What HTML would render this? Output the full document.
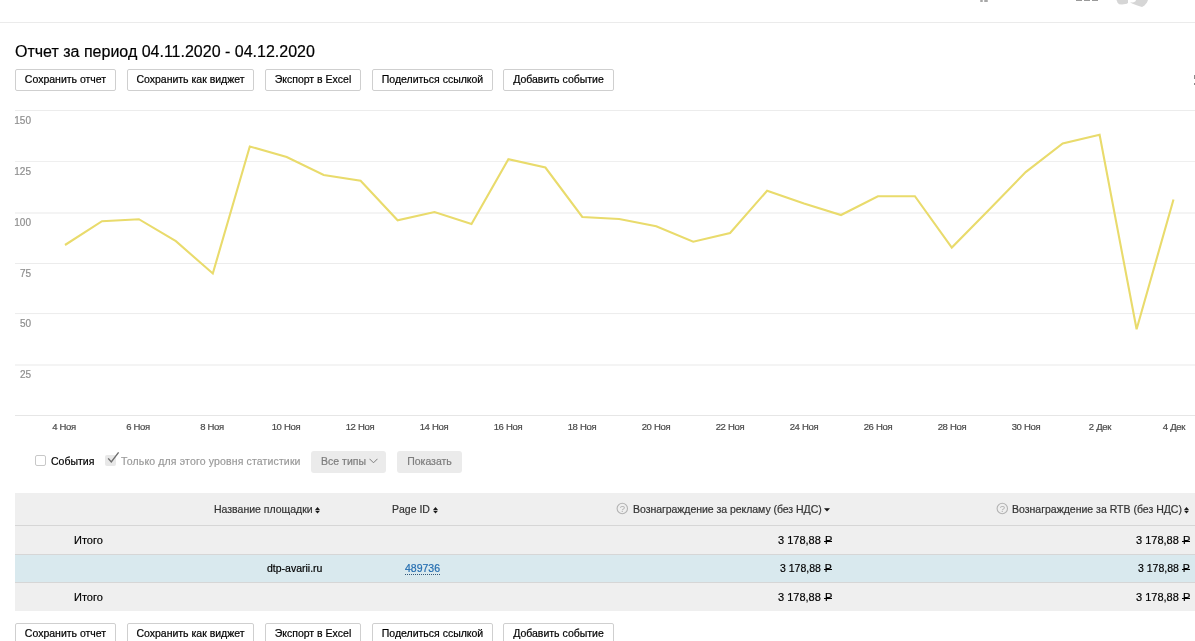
<!DOCTYPE html>
<html><head><meta charset="utf-8">
<style>
*{margin:0;padding:0;box-sizing:border-box}
html,body{width:1195px;height:641px;overflow:hidden;background:#fff}
body{position:relative;-webkit-text-stroke:0.2px currentColor;font-family:"Liberation Sans",sans-serif;color:#000}
.a{position:absolute;white-space:nowrap;will-change:transform}
.topline{position:absolute;left:0;top:22px;width:1195px;height:1px;background:#ebebeb}
.title{left:15px;top:43px;font-size:16px;line-height:18px;color:#000}
.btn{position:absolute;will-change:transform;height:22px;border:1px solid #cfcfcf;border-radius:2px;background:#fff;font-size:10.5px;line-height:19px;text-align:center;color:#000}
.yl{position:absolute;will-change:transform;font-size:10px;line-height:12px;color:#8e8e8e;width:17px;text-align:right;left:14px}
.xl{position:absolute;will-change:transform;font-size:9.5px;line-height:10px;letter-spacing:-.3px;color:#4a4a4a;width:60px;text-align:center;top:422px}
.gbtn{position:absolute;will-change:transform;height:22px;top:451px;background:#ebebeb;border-radius:3px;font-size:10.5px;line-height:21px;color:#7d7d7d;text-align:center}
.tbl{position:absolute;left:15px;width:1180px;background:#efefef}
.t{position:absolute;will-change:transform;font-size:10.5px;line-height:12px;white-space:nowrap}
.v{word-spacing:0}
.rub{display:inline-block;position:relative;margin-left:1px}
.rub::after{content:"";position:absolute;left:-.5px;right:.3px;top:7.2px;height:1.1px;background:currentColor}
</style></head><body>

<!-- top header remnants -->
<div class="topline"></div>
<div class="a" style="left:980px;top:0;width:3px;height:2px;background:#a8a8a8;border-radius:1px"></div>
<div class="a" style="left:984px;top:0;width:4px;height:2px;background:#a8a8a8;border-radius:1px"></div>
<div class="a" style="left:1076px;top:0;width:6px;height:1px;background:#9a9a9a"></div>
<div class="a" style="left:1084px;top:0;width:6px;height:1px;background:#9a9a9a"></div>
<div class="a" style="left:1092px;top:0;width:6px;height:1px;background:#9a9a9a"></div>
<svg class="a" style="left:1105px;top:0" width="50" height="10" viewBox="0 0 50 10">
  <path d="M11.5 0 L23 0 L23 2.8 L22 3.8 L17 4.6 L14 4.2 L12.5 2.5 Z" fill="#d6d6d6"/>
  <path d="M24.7 1.8 Q27.5 3.4 30.5 1.2 L31 0 L43 0 L42 2.5 L39.5 5.5 L37 6.9 L33 5.8 L27 3.5 Z" fill="#d6d6d6"/>
</svg>

<div class="a title">Отчет за период 04.11.2020 - 04.12.2020</div>

<div class="btn" style="left:15px;top:69px;width:101px">Сохранить отчет</div>
<div class="btn" style="left:127px;top:69px;width:127px">Сохранить как виджет</div>
<div class="btn" style="left:265px;top:69px;width:96px">Экспорт в Excel</div>
<div class="btn" style="left:372px;top:69px;width:121px">Поделиться ссылкой</div>
<div class="btn" style="left:503px;top:69px;width:111px">Добавить событие</div>

<div class="a" style="left:1194px;top:75px;width:1px;height:4px;background:#8a8a8a"></div>
<div class="a" style="left:1194px;top:83px;width:1px;height:2px;background:#8a8a8a"></div>

<!-- chart -->
<svg class="a" style="left:0;top:0" width="1195" height="440" viewBox="0 0 1195 440">
  <line x1="15" y1="110.5" x2="1195" y2="110.5" stroke="#ececec"/>
  <line x1="15" y1="161.5" x2="1195" y2="161.5" stroke="#efefef"/>
  <line x1="15" y1="213" x2="1195" y2="213" stroke="#e9e9e9"/>
  <line x1="15" y1="263.5" x2="1195" y2="263.5" stroke="#ececec"/>
  <line x1="15" y1="313.6" x2="1195" y2="313.6" stroke="#ececec"/>
  <line x1="15" y1="365" x2="1195" y2="365" stroke="#e9e9e9"/>
  <line x1="15" y1="415.5" x2="1195" y2="415.5" stroke="#e6e6e6"/>
  <polyline fill="none" stroke="#e9db6c" stroke-width="2.1" stroke-linejoin="miter"
   points="65.0,245 102.0,221.2 138.9,219.2 175.9,241.2 212.8,273.5 249.8,146.5 286.7,157 323.7,175 360.6,180.7 397.6,220.3 434.5,212 471.5,224 508.4,159.2 545.4,167.5 582.3,217 619.2,219 656.2,226.2 693.2,241.7 730.1,233 767.1,190.7 804.0,203.5 841.0,215 877.9,196.2 914.9,196.2 951.8,247.6 988.8,210 1025.7,172.1 1062.7,143.4 1099.6,134.8 1136.6,329.2 1173.5,199.5"/>
</svg>
<div class="yl" style="top:115px">150</div>
<div class="yl" style="top:166px">125</div>
<div class="yl" style="top:217px">100</div>
<div class="yl" style="top:268px">75</div>
<div class="yl" style="top:318px">50</div>
<div class="yl" style="top:369px">25</div>

<div class="xl" style="left:34px">4 Ноя</div>
<div class="xl" style="left:108px">6 Ноя</div>
<div class="xl" style="left:182px">8 Ноя</div>
<div class="xl" style="left:256px">10 Ноя</div>
<div class="xl" style="left:330px">12 Ноя</div>
<div class="xl" style="left:404px">14 Ноя</div>
<div class="xl" style="left:478px">16 Ноя</div>
<div class="xl" style="left:552px">18 Ноя</div>
<div class="xl" style="left:626px">20 Ноя</div>
<div class="xl" style="left:700px">22 Ноя</div>
<div class="xl" style="left:774px">24 Ноя</div>
<div class="xl" style="left:848px">26 Ноя</div>
<div class="xl" style="left:922px">28 Ноя</div>
<div class="xl" style="left:996px">30 Ноя</div>
<div class="xl" style="left:1070px">2 Дек</div>
<div class="xl" style="left:1144px">4 Дек</div>

<!-- events row -->
<div class="a" style="left:35px;top:455px;width:11px;height:11px;border:1px solid #c8c8c8;border-radius:2px;background:#fff"></div>
<div class="t" style="left:51px;top:455px;color:#000">События</div>
<div class="a" style="left:105px;top:455px;width:11px;height:11px;border-radius:2px;background:#e8e8e8"></div>
<svg class="a" style="left:104px;top:450px" width="16" height="16" viewBox="0 0 16 16">
  <path d="M4.2 8.4 L7.3 12 L14.6 2.3" fill="none" stroke="#6e6e6e" stroke-width="1.4"/>
</svg>
<div class="t" style="left:121px;top:455px;color:#9a9a9a;letter-spacing:.15px">Только для этого уровня статистики</div>
<div class="gbtn" style="left:311px;width:75px;padding-left:2px">Все типы <svg width="9" height="6" viewBox="0 0 9 6" style="vertical-align:1px"><path d="M0.5 0.8 L4.5 4.8 L8.5 0.8" fill="none" stroke="#7d7d7d" stroke-width="1"/></svg></div>
<div class="gbtn" style="left:397px;width:65px">Показать</div>

<!-- table -->
<div class="tbl" style="top:493px;height:32px"></div>
<div class="a" style="left:15px;top:525px;width:1180px;height:1px;background:#d6d6d6"></div>
<div class="tbl" style="top:526px;height:28px"></div>
<div class="a" style="left:15px;top:554px;width:1180px;height:1px;background:#d6d6d6"></div>
<div class="tbl" style="top:555px;height:27px;background:#d9e9ee"></div>
<div class="a" style="left:15px;top:582px;width:1180px;height:1px;background:#d6d6d6"></div>
<div class="tbl" style="top:583px;height:28px"></div>

<div class="t" style="left:214px;top:503px;color:#333">Название площадки</div>
<svg class="a" style="left:315px;top:507px" width="5" height="7" viewBox="0 0 5 7"><path d="M2.5 0 L5 2.9 L0 2.9 Z M2.5 6.6 L5 3.8 L0 3.8 Z" fill="#1a1a1a"/></svg>
<div class="t" style="left:392px;top:503px;color:#333">Page ID</div>
<svg class="a" style="left:433px;top:507px" width="5" height="7" viewBox="0 0 5 7"><path d="M2.5 0 L5 2.9 L0 2.9 Z M2.5 6.6 L5 3.8 L0 3.8 Z" fill="#1a1a1a"/></svg>
<svg class="a" style="left:616px;top:502px" width="13" height="13" viewBox="0 0 13 13"><circle cx="6.3" cy="6.5" r="5.2" fill="none" stroke="#b3b3b3" stroke-width="1.1"/><text x="6.4" y="9.8" font-family="Liberation Sans" font-size="9.5" fill="#aaaaaa" text-anchor="middle" style="-webkit-text-stroke:0">?</text></svg>
<div class="t" style="left:633px;top:503px;color:#333;letter-spacing:-.04px">Вознаграждение за рекламу (без НДС)</div>
<svg class="a" style="left:824px;top:508px" width="6" height="4" viewBox="0 0 6 4"><path d="M0 0.2 L6 0.2 L3 3.4 Z" fill="#111"/></svg>
<svg class="a" style="left:996px;top:502px" width="13" height="13" viewBox="0 0 13 13"><circle cx="6.3" cy="6.5" r="5.2" fill="none" stroke="#b3b3b3" stroke-width="1.1"/><text x="6.4" y="9.8" font-family="Liberation Sans" font-size="9.5" fill="#aaaaaa" text-anchor="middle" style="-webkit-text-stroke:0">?</text></svg>
<div class="t" style="left:1012px;top:503px;color:#333">Вознаграждение за RTB (без НДС)</div>
<svg class="a" style="left:1184px;top:507px" width="5" height="7" viewBox="0 0 5 7"><path d="M2.5 0 L5 2.9 L0 2.9 Z M2.5 6.6 L5 3.8 L0 3.8 Z" fill="#1a1a1a"/></svg>

<div class="t" style="left:74px;top:534px;font-size:11px">Итого</div>
<div class="t v" style="right:363px;top:534px;font-size:11px">3 178,88 <span class="rub">Р</span></div>
<div class="t v" style="right:5px;top:534px;font-size:11px">3 178,88 <span class="rub">Р</span></div>

<div class="t" style="left:267px;top:562px">dtp-avarii.ru</div>
<div class="t" style="left:405px;top:562px;color:#246db0;border-bottom:1px dotted #33587a;line-height:12px;height:13px">489736</div>
<div class="t v" style="right:363px;top:562px;word-spacing:0">3 178,88 <span class="rub">Р</span></div>
<div class="t v" style="right:5px;top:562px;word-spacing:0">3 178,88 <span class="rub">Р</span></div>

<div class="t" style="left:74px;top:591px;font-size:11px">Итого</div>
<div class="t v" style="right:363px;top:591px;font-size:11px">3 178,88 <span class="rub">Р</span></div>
<div class="t v" style="right:5px;top:591px;font-size:11px">3 178,88 <span class="rub">Р</span></div>

<!-- bottom buttons -->
<div class="btn" style="left:15px;top:623px;width:101px">Сохранить отчет</div>
<div class="btn" style="left:127px;top:623px;width:127px">Сохранить как виджет</div>
<div class="btn" style="left:265px;top:623px;width:96px">Экспорт в Excel</div>
<div class="btn" style="left:372px;top:623px;width:121px">Поделиться ссылкой</div>
<div class="btn" style="left:503px;top:623px;width:111px">Добавить событие</div>

</body></html>
